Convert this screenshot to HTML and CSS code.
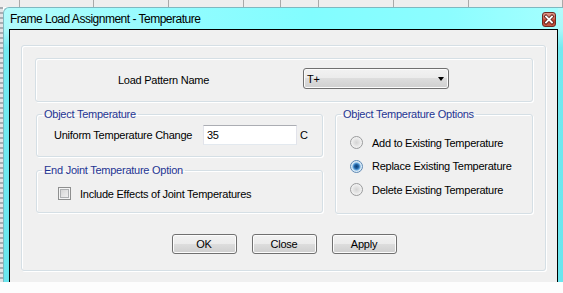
FILE: index.html
```html
<!DOCTYPE html>
<html lang="en">

<head>
    <meta charset="UTF-8">
    <title>Frame Load Assignment - Temperature</title>
    <link rel="stylesheet" href="styles.css">
</head>

<body>
    <div class="screen">
        <!-- spreadsheet behind the dialog -->
        <div class="sheet">
            <span></span><span></span><span></span><span></span><span></span>
            <span></span><span></span><span></span><span></span>
        </div>
        <div class="desk">
            <div class="gutter"></div>
            <div class="window">
                <div class="titlebar">
                    <span class="title">Frame Load Assignment - Temperature</span>
                    <span class="close-btn">
                        <svg width="12" height="11" viewBox="0 0 12 11">
                            <path d="M3 2.5 L9 8.5 M9 2.5 L3 8.5" stroke="#5a1d16" stroke-width="3.4" stroke-linecap="square" />
                            <path d="M3 2.5 L9 8.5 M9 2.5 L3 8.5" stroke="#fff" stroke-width="1.8" stroke-linecap="square" />
                        </svg>
                    </span>
                </div>
                <div class="client">
                    <div class="panel">
                        <div class="pattern-row">
                            <span class="pattern-label">Load Pattern Name</span>
                            <div class="combo">
                                <span>T+</span>
                                <span class="combo-arrow"></span>
                            </div>
                        </div>

                        <div class="groups">
                            <div class="left-col">
                                <fieldset class="group group-temp">
                                    <legend>Object Temperature</legend>
                                    <div class="temp-row">
                                        <span class="temp-label">Uniform Temperature Change</span>
                                        <div class="text-input">35</div>
                                        <span class="unit">C</span>
                                    </div>
                                </fieldset>
                                <fieldset class="group group-joint">
                                    <legend>End Joint Temperature Option</legend>
                                    <div class="check-row">
                                        <span class="checkbox"></span>
                                        <span>Include Effects of Joint Temperatures</span>
                                    </div>
                                </fieldset>
                            </div>
                            <fieldset class="group group-options">
                                <legend>Object Temperature Options</legend>
                                <div class="radio-list">
                                    <div class="radio-row"><span class="radio"></span><span>Add to Existing Temperature</span></div>
                                    <div class="radio-row"><span class="radio checked"></span><span>Replace Existing Temperature</span></div>
                                    <div class="radio-row"><span class="radio"></span><span>Delete Existing Temperature</span></div>
                                </div>
                            </fieldset>
                        </div>

                        <div class="buttons">
                            <button class="btn">OK</button>
                            <button class="btn">Close</button>
                            <button class="btn">Apply</button>
                        </div>
                    </div>
                </div>
            </div>
        </div>
    </div>
</body>

</html>
```

FILE: styles.css
```css
body {
    margin: 0;
    background-color: #fdfdfd;
    font-family: "Liberation Sans", Arial, sans-serif;
    font-size: 11px;
    letter-spacing: -0.25px;
    color: #000;
    overflow: hidden;
}

.screen {
    height: 282px;
    display: flex;
    flex-direction: column;
}

.sheet {
    height: 7px;
    display: grid;
    grid-template-columns: 20px 74px 75px 75px 37px 38px 75px 75px 1fr;
    background-color: #eeeeee;
}

.sheet span {
    border-right: 1px solid #a9a9a9;
}

.desk {
    flex: 1;
    display: flex;
}

.gutter {
    width: 3px;
    background: repeating-linear-gradient(#a8adb2 0 2px, #e2e4e6 2px 5px);
}

.window {
    flex: 1;
    display: flex;
    flex-direction: column;
    border-top: 1px solid #7fb8c0;
    border-left: 1px solid #7fb8c0;
    border-radius: 6px 0 0 0;
    padding-left: 5px;
    background: linear-gradient(#b4fcfc 0, #a8f8fa 22px, #74eaf0 40px, #6ae6ee 100%);
}

.titlebar {
    width: 549px;
    height: 21px;
    display: flex;
    align-items: center;
    background: linear-gradient(90deg, #b2fbfb 0%, #92fcff 30%, #82fdff 55%, #8cfdff 80%, #a4ffff 100%);
}

.title {
    padding-left: 1px;
    font-size: 12px;
    letter-spacing: -0.5px;
}

.close-btn {
    margin-left: auto;
    margin-right: 2px;
    align-self: flex-start;
    margin-top: 4px;
    width: 14px;
    height: 15px;
    box-sizing: border-box;
    border: 1px solid #6e2a22;
    border-radius: 3px;
    background: linear-gradient(#e19a8c 0%, #cf6a58 45%, #bb3f2c 55%, #c65a44 100%);
    display: flex;
    align-items: center;
    justify-content: center;
}

.client {
    width: 549px;
    flex: 1;
    box-sizing: border-box;
    background-color: #f0f0f0;
    border: 1px solid #000;
    border-bottom: none;
    padding: 15px 11px 0 11px;
}

.panel,
.pattern-row,
.group {
    border: 1px solid #d5dfe5;
    border-radius: 3px;
    box-shadow: inset 1px 1px 0 #fff, 1px 1px 0 #fff;
}

.panel {
    height: 226px;
    box-sizing: border-box;
    padding: 12px 12px 0 13px;
}

.pattern-row {
    height: 44px;
    box-sizing: border-box;
    display: flex;
    align-items: center;
    padding-left: 82px;
}

.pattern-label {
    width: 185px;
}

.combo {
    align-self: flex-start;
    margin-top: 9px;
    width: 146px;
    height: 21px;
    box-sizing: border-box;
    border: 1px solid #707070;
    border-radius: 3px;
    background: linear-gradient(#f2f2f2 0%, #ebebeb 50%, #dddddd 50%, #cfcfcf 100%);
    box-shadow: inset 0 0 0 1px #fbfbfb;
    display: flex;
    align-items: center;
    justify-content: space-between;
    padding: 0 4px 0 3px;
}

.combo-arrow {
    width: 0;
    height: 0;
    border-top: 4px solid #000;
    border-left: 3.5px solid transparent;
    border-right: 3.5px solid transparent;
}

.groups {
    display: flex;
    gap: 12px;
    margin: 6px 0 0 1px;
}

.left-col {
    width: 287px;
    display: flex;
    flex-direction: column;
    gap: 7px;
}

.group {
    margin: 0;
    padding: 0;
    min-width: 0;
    box-sizing: border-box;
}

.group legend {
    padding: 0 2px;
    margin-left: 5px;
    line-height: 13px;
    color: #1f3593;
}

.group-temp,
.group-joint {
    height: 49px;
}

.group-options {
    width: 198px;
    height: 106px;
}

.temp-row {
    display: flex;
    align-items: center;
    padding: 4px 0 0 17px;
}

.temp-label {
    width: 149px;
}

.text-input {
    width: 94px;
    height: 20px;
    box-sizing: border-box;
    background-color: #fff;
    border: 1px solid #e2e3ea;
    border-top-color: #abadb3;
    border-bottom-color: #e3e9ef;
    padding-left: 3px;
    line-height: 18px;
}

.unit {
    margin-left: 3px;
}

.check-row {
    display: flex;
    align-items: center;
    padding: 10px 0 0 21px;
    gap: 9px;
}

.checkbox {
    width: 13px;
    height: 13px;
    box-sizing: border-box;
    border: 1px solid #8e8f8f;
    background: linear-gradient(135deg, #cfcfcf, #f6f6f6);
    box-shadow: inset 0 0 0 1px #f4f4f4, inset 0 0 0 2px #aeb0b2;
}

.radio-list {
    display: flex;
    flex-direction: column;
    gap: 10.5px;
    padding: 15px 0 0 14px;
}

.radio-row {
    display: flex;
    align-items: center;
    height: 13px;
    gap: 9px;
}

.radio {
    width: 13px;
    height: 13px;
    box-sizing: border-box;
    border-radius: 50%;
    border: 1px solid #9a9b9c;
    background: radial-gradient(circle at 50% 50%, #d4d4d4 0, #e4e4e4 3px, #f6f6f6 6px);
}

.radio.checked {
    border-color: #5e8ab5;
    background: radial-gradient(circle at 50% 50%, #0f3f73 0, #1d5fa0 2px, #66a8df 3.5px, #cfe4f4 4.5px, #eef4fa 6px);
}

.buttons {
    display: flex;
    justify-content: center;
    gap: 15px;
    margin-top: 20px;
}

.btn {
    width: 65px;
    height: 20px;
    padding: 0;
    font-family: inherit;
    font-size: 11px;
    letter-spacing: -0.25px;
    color: #000;
    border: 1px solid #707070;
    border-radius: 3px;
    background: linear-gradient(#f2f2f2 0%, #ebebeb 50%, #dddddd 50%, #cfcfcf 100%);
    box-shadow: inset 0 0 0 1px #fcfcfc;
}
```
